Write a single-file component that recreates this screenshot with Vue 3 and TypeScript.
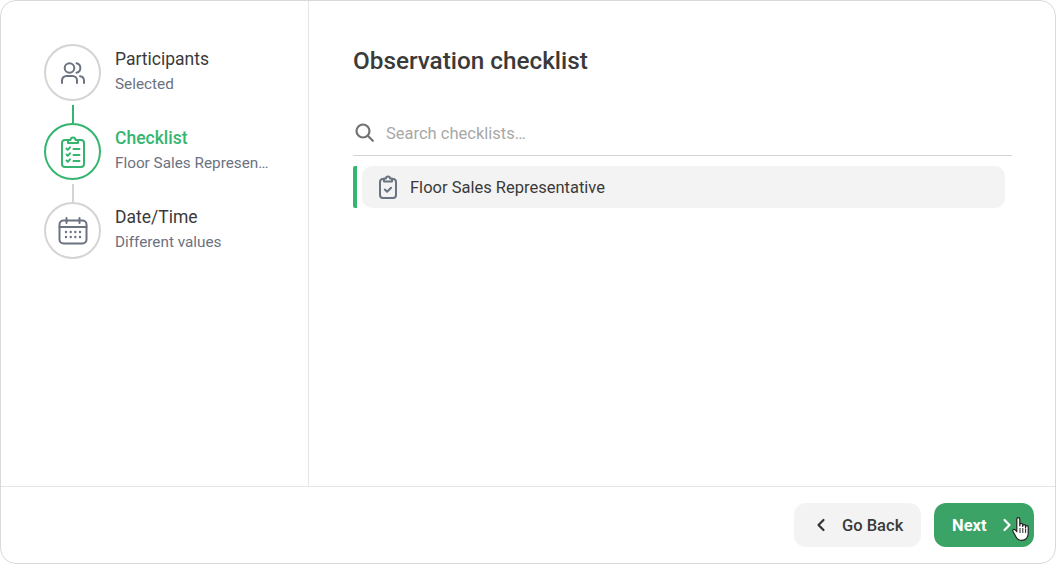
<script setup lang="ts">
const steps = [
  { key: 'p', title: 'Participants', sub: 'Selected', active: false },
  { key: 'c', title: 'Checklist', sub: 'Floor Sales Representative', active: true },
  { key: 'd', title: 'Date/Time', sub: 'Different values', active: false },
]
</script>

<template>
  <div class="frame">
    <div class="body">
      <aside class="side">
        <div v-for="(s, i) in steps" :key="s.key" class="step" :class="{ active: s.active }">
          <div class="rail">
            <div class="circle">
              <svg v-if="s.key === 'p'" width="24" height="22" viewBox="0 0 24 22" fill="none" stroke="#6b7280" stroke-width="2" stroke-linecap="round" stroke-linejoin="round">
                <circle cx="8.500" cy="6" r="4.800" />
                <path d="M1 21v-2.500a4.500 4.500 0 0 1 4.500-4.500h6a4.500 4.500 0 0 1 4.500 4.500V21" />
                <path d="M15.500 1.300a4.800 4.800 0 0 1 0 9.400" />
                <path d="M19 14.200a4.500 4.500 0 0 1 4 4.300V21" />
              </svg>
              <svg v-else-if="s.key === 'c'" width="24" height="32" viewBox="0 0 24 32" fill="none" stroke="#35b56f" stroke-width="2" stroke-linecap="round" stroke-linejoin="round">
                <path d="M7 4H4a3 3 0 0 0-3 3v21a3 3 0 0 0 3 3h16a3 3 0 0 0 3-3V7a3 3 0 0 0-3-3h-3" />
                <path d="M7 7h10V4h-2.500a2.500 2.500 0 0 0-5 0H7z" />
                <path d="M5.500 12.500l1.300 1.300 2.200-2.500M5.500 18.500l1.300 1.300 2.200-2.500M5.500 24.500l1.300 1.300 2.200-2.500" />
                <path d="M12.500 13h6M12.500 19h6M12.500 25h6" />
              </svg>
              <svg v-else width="30" height="28" viewBox="0 0 30 28" fill="none" stroke="#6b7280" stroke-width="2" stroke-linecap="round" stroke-linejoin="round">
                <rect x="1.500" y="3.500" width="27" height="23" rx="4" />
                <path d="M1.500 10h27M8.500 1v5M21.500 1v5" />
                <path d="M8 15h.01M12.700 15h.01M17.300 15h.01M22 15h.01M8 20h.01M12.700 20h.01M17.300 20h.01M22 20h.01" stroke-width="2.400" />
              </svg>
            </div>
            <div v-if="i < steps.length - 1" class="link" :class="{ green: i === 0 }"></div>
          </div>
          <div class="label">
            <div class="title">{{ s.title }}</div>
            <div class="sub">{{ s.sub }}</div>
          </div>
        </div>
      </aside>
      <main class="main">
        <h1 class="heading">Observation checklist</h1>
        <div class="search">
          <svg width="19" height="19" viewBox="0 0 19 19" fill="none" stroke="#737373" stroke-width="2.200" stroke-linecap="round">
            <circle cx="8" cy="8" r="6.500" />
            <path d="M13 13L17.800 17.800" />
          </svg>
          <span class="placeholder">Search checklists…</span>
        </div>
        <div class="row">
          <div class="marker"></div>
          <div class="item">
            <svg width="18" height="24" viewBox="0 0 18 24" fill="none" stroke="#6b7280" stroke-width="2" stroke-linecap="round" stroke-linejoin="round">
              <path d="M5 4H4a3 3 0 0 0-3 3v13a3 3 0 0 0 3 3h10a3 3 0 0 0 3-3V7a3 3 0 0 0-3-3h-1" />
              <path d="M5 6.500h8V3.500h-2a2 2 0 0 0-4 0H5z" />
              <path d="M5.800 14.500l2.300 2.300 4-4" />
            </svg>
            <span>Floor Sales Representative</span>
          </div>
        </div>
      </main>
    </div>
    <footer class="foot">
      <button class="btn back">
        <svg width="10" height="14" viewBox="0 0 10 14" fill="none" stroke="#333" stroke-width="2.200" stroke-linecap="round" stroke-linejoin="round"><path d="M7.500 2L2.500 7l5 5" /></svg>
        <span>Go Back</span>
      </button>
      <button class="btn next">
        <span>Next</span>
        <svg width="10" height="14" viewBox="0 0 10 14" fill="none" stroke="#fff" stroke-width="2.200" stroke-linecap="round" stroke-linejoin="round"><path d="M2.500 2l5 5-5 5" /></svg>
        <svg class="hand" width="18" height="24" viewBox="0 0 18 24" fill="#fff" stroke="#222" stroke-width="1.200" stroke-linejoin="round">
          <path d="M4.800 2.200a1.500 1.500 0 0 1 3 0V9l.1-1.300a1.400 1.400 0 0 1 2.800 0V9.500l.1-.9a1.400 1.400 0 0 1 2.700 0v2l.1-.6a1.300 1.300 0 0 1 2.600 0V16.500c0 3.900-2.500 6.900-6.300 6.900-3.100 0-4.800-1.300-6-3.700L.9 14.200c-.7-1.400 1.200-2.600 2.300-1.400l1.600 1.900z" />
          <path d="M8 11v5M10.800 11v5M13.600 11.500v4.500" fill="none" stroke-width="1" />
        </svg>
      </button>
    </footer>
  </div>
</template>

<style scoped>
.frame {
  width: 1056px;
  height: 564px;
  box-sizing: border-box;
  border: 1px solid #d9d9d9;
  border-radius: 16px;
  background: #fff;
  display: flex;
  flex-direction: column;
  overflow: hidden;
  font-family: Roboto, "Liberation Sans", sans-serif;
  color: #3a3a3a;
}
.body { flex: 1; display: flex; min-height: 0; }
.side {
  width: 308px;
  box-sizing: border-box;
  border-right: 1px solid #e5e5e5;
  padding: 43px 0 0 43px;
}
.step { display: flex; gap: 14px; height: 79px; }
.rail { width: 57px; display: flex; flex-direction: column; align-items: center; flex: none; }
.circle {
  width: 57px;
  height: 57px;
  box-sizing: border-box;
  border: 2px solid #d4d4d4;
  border-radius: 50%;
  display: flex;
  align-items: center;
  justify-content: center;
  flex: none;
  background: #fff;
}
.active .circle { border-color: #35b56f; }
.link { width: 2px; height: 18px; margin-top: 4px; background: #d4d4d4; flex: none; }
.link.green { background: #35b56f; }
.label { padding-top: 3px; width: 155px; min-width: 0; }
.title { font-size: 17.500px; line-height: 24px; color: #3a3a3a; }
.active .title { color: #35b56f; font-weight: 500; }
.sub {
  font-size: 15.300px;
  line-height: 20px;
  margin-top: 3px;
  color: #6b7280;
  white-space: nowrap;
  overflow: hidden;
  text-overflow: ellipsis;
}
.main { flex: 1; padding: 44px 43px 0 44px; min-width: 0; }
.heading { margin: 0; font-size: 24.300px; line-height: 32px; font-weight: 500; color: #3a3a3a; }
.search {
  margin-top: 33px;
  height: 46px;
  box-sizing: border-box;
  border-bottom: 1px solid #d4d4d4;
  display: flex;
  align-items: center;
  gap: 12px;
  padding: 0 0 0 2px;
}
.placeholder { font-size: 16.500px; color: #a8a8a8; padding-top: 1px; }
.row { margin-top: 10px; display: flex; gap: 5px; height: 42px; padding-right: 7px; }
.marker { width: 4px; background: #35b56f; border-radius: 2px 0 0 2px; flex: none; }
.item {
  flex: 1;
  background: #f3f3f3;
  border-radius: 10px;
  display: flex;
  align-items: center;
  gap: 13px;
  padding-left: 17px;
  font-size: 16.500px;
  color: #3a3a3a;
}
.foot {
  height: 77px;
  box-sizing: border-box;
  border-top: 1px solid #e5e5e5;
  display: flex;
  justify-content: flex-end;
  align-items: flex-start;
  gap: 13px;
  padding: 16px 21px 0 0;
}
.btn {
  height: 44px;
  border: 0;
  border-radius: 12px;
  font-family: inherit;
  font-size: 16.500px;
  font-weight: 500;
  display: flex;
  align-items: center;
  padding: 0;
  position: relative;
}
.back { width: 127px; background: #f3f3f3; color: #3a3a3a; padding-left: 22px; gap: 16px; }
.next { width: 100px; background: #3aa365; color: #fff; padding-left: 18px; gap: 15px; font-weight: 700; }
.hand { position: absolute; left: 78px; top: 14px; }
</style>

<style>
html, body { margin: 0; background: #fff; }
</style>
